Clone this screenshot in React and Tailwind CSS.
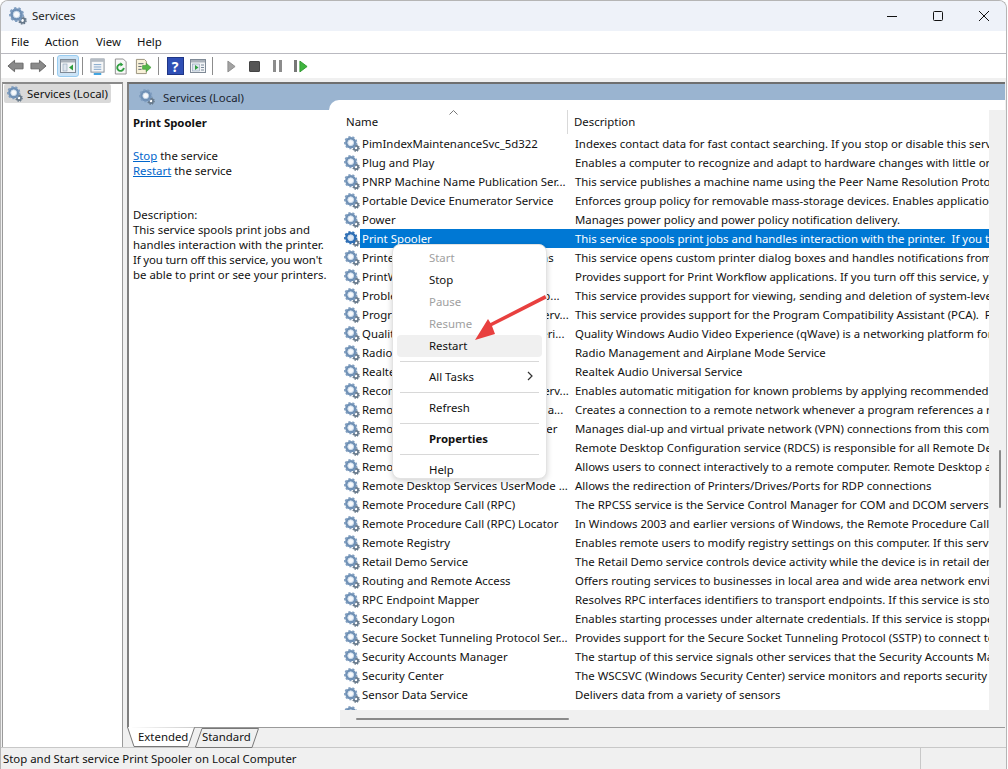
import React from "react";

const Gear = ({ selected = false, className = "w-4 h-4" }) => (
  <svg viewBox="0 0 16 16" className={className + " shrink-0"}>
    <circle cx="12" cy="12" r="2.1" fill="#fff" stroke="#66788a" strokeWidth="1.7" />
    <circle cx="12" cy="12" r="3.2" fill="none" stroke="#66788a" strokeWidth="1.2" strokeDasharray="1.4 1.1" />
    <circle cx="6.7" cy="6.7" r="4.3" fill="none" stroke={selected ? "#2f6fb5" : "#6f90b5"} strokeWidth="2.6" />
    <circle cx="6.7" cy="6.7" r="5.8" fill="none" stroke={selected ? "#2f6fb5" : "#7f9dbf"} strokeWidth="1.7" strokeDasharray="2.1 1.95" />
    <circle cx="6.7" cy="6.7" r="2.9" fill={selected ? "#dfe9f5" : "#f7f9fc"} stroke="#b8cde2" strokeWidth="0.7" />
  </svg>
);

const rows = [
  ["PimIndexMaintenanceSvc_5d322", "Indexes contact data for fast contact searching. If you stop or disable this service, contact data might be missing"],
  ["Plug and Play", "Enables a computer to recognize and adapt to hardware changes with little or no user input. Stopping or disabling"],
  ["PNRP Machine Name Publication Ser...", "This service publishes a machine name using the Peer Name Resolution Protocol. Configuration is managed via"],
  ["Portable Device Enumerator Service", "Enforces group policy for removable mass-storage devices. Enables applications such as Windows Media Player"],
  ["Power", "Manages power policy and power policy notification delivery."],
  ["Print Spooler", "This service spools print jobs and handles interaction with the printer.  If you turn off this service, you won't"],
  ["Printer Extensions and Notifications", "This service opens custom printer dialog boxes and handles notifications from a remote print server or a printer"],
  ["PrintWorkflow_5d322", "Provides support for Print Workflow applications. If you turn off this service, you may not be able to print"],
  ["Problem Reports Control Panel Sup...", "This service provides support for viewing, sending and deletion of system-level problem reports for the Problem"],
  ["Program Compatibility Assistant Serv...", "This service provides support for the Program Compatibility Assistant (PCA).  PCA monitors programs installed"],
  ["Quality Windows Audio Video Experi...", "Quality Windows Audio Video Experience (qWave) is a networking platform for Audio Video (AV) streaming"],
  ["Radio Management Service", "Radio Management and Airplane Mode Service"],
  ["Realtek Audio Universal Service", "Realtek Audio Universal Service"],
  ["Recommended Troubleshooting Serv...", "Enables automatic mitigation for known problems by applying recommended troubleshooting. If stopped, your"],
  ["Remote Access Auto Connection Ma...", "Creates a connection to a remote network whenever a program references a remote DNS or NetBIOS name or"],
  ["Remote Access Connection Manager", "Manages dial-up and virtual private network (VPN) connections from this computer to the Internet or other remote"],
  ["Remote Desktop Configuration", "Remote Desktop Configuration service (RDCS) is responsible for all Remote Desktop Services and Remote Desktop"],
  ["Remote Desktop Services", "Allows users to connect interactively to a remote computer. Remote Desktop and Remote Desktop Session Host"],
  ["Remote Desktop Services UserMode ...", "Allows the redirection of Printers/Drives/Ports for RDP connections"],
  ["Remote Procedure Call (RPC)", "The RPCSS service is the Service Control Manager for COM and DCOM servers. It performs object activations"],
  ["Remote Procedure Call (RPC) Locator", "In Windows 2003 and earlier versions of Windows, the Remote Procedure Call (RPC) Locator service manages the"],
  ["Remote Registry", "Enables remote users to modify registry settings on this computer. If this service is stopped, the registry can be"],
  ["Retail Demo Service", "The Retail Demo service controls device activity while the device is in retail demo mode."],
  ["Routing and Remote Access", "Offers routing services to businesses in local area and wide area network environments."],
  ["RPC Endpoint Mapper", "Resolves RPC interfaces identifiers to transport endpoints. If this service is stopped or disabled, programs using"],
  ["Secondary Logon", "Enables starting processes under alternate credentials. If this service is stopped, this type of logon access will be"],
  ["Secure Socket Tunneling Protocol Ser...", "Provides support for the Secure Socket Tunneling Protocol (SSTP) to connect to remote computers using VPN."],
  ["Security Accounts Manager", "The startup of this service signals other services that the Security Accounts Manager (SAM) is ready to accept"],
  ["Security Center", "The WSCSVC (Windows Security Center) service monitors and reports security health settings on the computer."],
  ["Sensor Data Service", "Delivers data from a variety of sensors"],
  ["", ""],
];

const menu = [
  ["Start", "off"], ["Stop", ""], ["Pause", "off"], ["Resume", "off"], ["Restart", "hover"], "-",
  ["All Tasks", "sub"], "-", ["Refresh", ""], "-", ["Properties", "bold"], "-", ["Help", ""],
];

const Tb = ({ w = "w-[23px]", active = false, children }) => (
  <div className={`${w} h-[22px] flex items-center justify-center shrink-0 ${active ? "bg-[#cce4f7] border border-[#99ccf0] rounded-[3px]" : ""}`}>{children}</div>
);
const Sep = () => <div className="w-px h-[18px] bg-[#8c8c8c] mx-[3px] shrink-0" />;

const Win = ({ children }) => (
  <svg viewBox="0 0 16 16" className="w-4 h-4">
    <rect x="0.5" y="1.5" width="15" height="13" fill="#f3f5f7" stroke="#7f8a96" />
    <rect x="1" y="2" width="14" height="2.5" fill="#a9b1ba" />
    {children}
  </svg>
);

export default function App() {
  return (
    <div className="relative w-[1008px] h-[769px] overflow-hidden bg-white text-[11.4px] leading-[15px] text-[#111] font-['Noto_Sans','Open_Sans',sans-serif]">
      <div className="w-[1007px] h-[769px] flex flex-col bg-[#f0f0f0] border-l border-r border-t border-[#b5b5b5] rounded-t-[8px] overflow-hidden">
        {/* title bar */}
        <div className="h-[30px] shrink-0 bg-[#eef2f9] flex items-center pl-[8px]">
          <Gear className="w-[18px] h-[18px] -mt-[1px]" />
          <span className="ml-[5px] text-[#222] -mt-[2px]">Services</span>
          <div className="ml-auto -mr-[1px] flex items-center">
            <div className="w-[46px] h-[30px] flex items-center justify-center">
              <div className="w-[10px] h-px bg-[#111]" />
            </div>
            <div className="w-[46px] h-[30px] flex items-center justify-center">
              <div className="w-[10px] h-[10px] border border-[#111] rounded-[1.5px]" />
            </div>
            <div className="w-[46px] h-[30px] flex items-center justify-center">
              <svg viewBox="0 0 10 10" className="w-[10px] h-[10px]"><path d="M0 0L10 10M10 0L0 10" stroke="#111" strokeWidth="1" /></svg>
            </div>
          </div>
        </div>
        {/* menu */}
        <div className="h-[23px] shrink-0 bg-white border-b border-[#b9b9c0] flex items-center pl-[10px] pb-[2px] text-[#111]">
          <span className="w-[34px]">File</span>
          <span className="w-[51px]">Action</span>
          <span className="w-[41px]">View</span>
          <span>Help</span>
        </div>
        {/* toolbar */}
        <div className="h-[24px] shrink-0 bg-white flex items-center pl-[3px]">
          <Tb>
            <svg viewBox="0 0 18 14" className="w-[17px] h-[14px]"><path d="M1 7L8 1V4H17V10H8V13Z" fill="#8a8a8a" stroke="#666" /></svg>
          </Tb>
          <Tb>
            <svg viewBox="0 0 18 14" className="w-[17px] h-[14px]"><path d="M17 7L10 1V4H1V10H10V13Z" fill="#8a8a8a" stroke="#666" /></svg>
          </Tb>
          <Sep />
          <Tb w="w-[22px]" active>
            <Win><rect x="3" y="6" width="4" height="7" fill="#dfe6ee" stroke="#8ea1b5" strokeWidth="0.6" /><path d="M13 6.5V12.5L9 9.5Z" fill="#2e9e3e" /></Win>
          </Tb>
          <Sep />
          <Tb w="w-[23px]">
            <svg viewBox="0 0 16 18" className="w-[15px] h-[17px]"><rect x="1" y="1" width="14" height="14" fill="#f5f6f7" stroke="#808a95" /><rect x="1" y="1" width="14" height="3" fill="#b5bcc4" /><path d="M4 7H12M4 9.5H12M4 12H12" stroke="#7aa0c8" /><rect x="4" y="16" width="8" height="2" fill="#38a0e0" /></svg>
          </Tb>
          <Tb>
            <svg viewBox="0 0 16 18" className="w-[15px] h-[17px]"><path d="M2.5 1H11L14 4V17H2.5Z" fill="#f7f7f7" stroke="#8c8c8c" /><path d="M11.5 10.5A3.5 3.5 0 1 1 9 6.8" fill="none" stroke="#2f9e3f" strokeWidth="2" /><path d="M8 4.5L11 7L8 9Z" fill="#2f9e3f" /></svg>
          </Tb>
          <Tb>
            <svg viewBox="0 0 18 18" className="w-[17px] h-[17px]"><path d="M1.5 1.5H10L12 3.5V16.5H1.5Z" fill="#f8f1d8" stroke="#97907a" /><path d="M3.5 6H9M3.5 9H7M3.5 12H7" stroke="#5c6670" /><path d="M8 8H12V5.5L17 10L12 14.5V12H8Z" fill="#55b848" stroke="#3a8f33" strokeWidth="0.6" /></svg>
          </Tb>
          <Sep />
          <div className="w-[2px] shrink-0" />
          <Tb w="w-[22px]">
            <div className="w-[17px] h-[18px] bg-[#2f4fb5] border border-[#1f3585] text-white font-bold text-[14px] leading-[17px] text-center">?</div>
          </Tb>
          <Tb w="w-[23px]">
            <Win><rect x="2.5" y="6" width="7" height="7" fill="#dfe6ee" stroke="#8ea1b5" strokeWidth="0.6" /><path d="M5 7V12L8.5 9.5Z" fill="#2e9e3e" /><path d="M11 7H14M11 9.5H14M11 12H14" stroke="#7a8a9a" /></Win>
          </Tb>
          <Sep />
          <div className="w-[4px] shrink-0" />
          <Tb>
            <svg viewBox="0 0 10 14" className="w-[9px] h-[13px]"><path d="M1 1L9 7L1 13Z" fill="#a3a3a3" stroke="#8a8a8a" /></svg>
          </Tb>
          <Tb>
            <div className="w-[11px] h-[11px] bg-[#555] border border-[#444] rounded-[1px]" />
          </Tb>
          <Tb>
            <div className="flex gap-[3px]"><div className="w-[3px] h-[12px] bg-[#8c8c8c]" /><div className="w-[3px] h-[12px] bg-[#8c8c8c]" /></div>
          </Tb>
          <Tb>
            <div className="flex items-center gap-[2px]"><div className="w-[3px] h-[12px] bg-[#777]" /><svg viewBox="0 0 10 14" className="w-[9px] h-[13px]"><path d="M1 1L9 7L1 13Z" fill="#3fb53f" stroke="#2e962e" /></svg></div>
          </Tb>
        </div>
        {/* band */}
        <div className="h-[4px] shrink-0 bg-[#f0f0f0]" />
        {/* main */}
        <div className="flex-1 min-h-0 flex">
          {/* tree */}
          <div className="w-[121px] ml-px shrink-0 bg-white border-t-2 border-r border-l border-[#9a9a9a] border-t-[#8a8a8a] pl-[1px]">
            <div className="h-[19px] w-[107px] bg-[#d9d9d9] rounded-[2px] flex items-center pl-[3px]">
              <Gear />
              <span className="ml-[4px] whitespace-nowrap">Services (Local)</span>
            </div>
          </div>
          <div className="w-[4px] shrink-0" />
          {/* right */}
          <div className="flex-1 min-w-0 flex flex-col mr-[1px]">
            <div className="h-[645px] shrink-0 bg-white border-t-2 border-l-2 border-[#7f7f7f] border-t-[#6f6f6f] flex flex-col">
              <div className="h-[26px] shrink-0 bg-[#9ab4d0] flex items-center pl-[10px]">
                <Gear />
                <span className="ml-[8px] text-[#1a2430]">Services (Local)</span>
              </div>
              <div className="flex-1 min-h-0 flex">
                <div className="w-[200px] shrink-0 pl-[4px] pt-[5px] whitespace-nowrap">
                  <div className="font-bold h-[15px]">Print Spooler</div>
                  <div className="mt-[18px]"><span className="text-[#0066cc] underline">Stop</span> the service</div>
                  <div><span className="text-[#0066cc] underline">Restart</span> the service</div>
                  <div className="mt-[29px]">Description:</div>
                  <div>This service spools print jobs and</div>
                  <div>handles interaction with the printer.</div>
                  <div className="tracking-[-0.15px]">If you turn off this service, you won't</div>
                  <div>be able to print or see your printers.</div>
                </div>
                {/* list */}
                <div className="relative z-10 flex-1 min-w-0 -mt-[10px] bg-white rounded-tl-[10px] overflow-hidden flex flex-col">
                  <div className="flex-1 min-h-0 flex pl-[11px]">
                    <div className="flex-1 min-w-0 flex flex-col overflow-hidden">
                      <div className="h-[34px] shrink-0 relative flex">
                        <div className="w-[228px] shrink-0 border-r border-[#d9d9d9] mt-[10px] pt-[4px] pl-[6px]">Name</div>
                        <div className="pl-[6px] mt-[14px]">Description</div>
                        <svg viewBox="0 0 9 5" className="absolute left-[109px] top-[10px] w-[9px] h-[5px]"><path d="M0.5 4.5L4.5 0.5L8.5 4.5" fill="none" stroke="#777" /></svg>
                      </div>
                      {rows.map(([n, d], i) => {
                        const sel = n === "Print Spooler";
                        return (
                          <div key={i} className="h-[19px] shrink-0 flex items-center whitespace-pre">
                            <div className="w-[20px] shrink-0 pl-[4px]"><Gear selected={sel} /></div>
                            <div className={`flex-1 min-w-0 flex items-center h-[19px] ${sel ? "bg-[#0078d4] text-white" : ""}`}>
                              <div className="w-[213px] shrink-0 pl-[2px] overflow-hidden">{n}</div>
                              <div className="pl-[2px]">{d}</div>
                            </div>
                          </div>
                        );
                      })}
                    </div>
                    <div className="w-[16px] shrink-0 bg-[#f0f0f0] mt-[10px] flex justify-center pt-[340px] pl-[5px]">
                      <div className="w-[2px] h-[58px] bg-[#8a8a8a] rounded-full" />
                    </div>
                  </div>
                  <div className="h-[17px] shrink-0 ml-[11px] bg-[#f0f0f0] pl-[16px] pt-[8px]">
                    <div className="w-[213px] h-[2px] bg-[#8a8a8a] rounded-full" />
                  </div>
                </div>
              </div>
            </div>
            {/* tabs */}
            <div className="h-[20px] shrink-0 flex border-t border-[#9a9a9a]">
              <div className="relative w-[68px] h-[20px] -mt-px pl-[11px] pt-[2px] z-10 shrink-0">
                <svg viewBox="0 0 68 20" className="absolute inset-0 w-[68px] h-[20px]"><path d="M0.5 0L7 19.5H61L67.5 0.5" fill="#fff" stroke="#777" /></svg>
                <span className="relative">Extended</span>
              </div>
              <div className="relative w-[64px] h-[20px] pl-[7px] pt-[1px] shrink-0">
                <svg viewBox="0 0 64 20" className="absolute inset-0 w-[64px] h-[20px]"><path d="M0.5 19L7 0.5H63.5L57 19.5H0.5" fill="#f0f0f0" stroke="#777" /></svg>
                <span className="relative">Standard</span>
              </div>
            </div>
          </div>
        </div>
        {/* status */}
        <div className="h-[22px] shrink-0 border-t border-[#c8c8c8] flex items-center pl-[2px]">
          <span className="flex-1">Stop and Start service Print Spooler on Local Computer</span>
          <div className="w-px h-full bg-[#c8c8c8] mr-[85px]" />
        </div>
      </div>

      {/* context menu */}
      <div className="absolute left-[392px] top-[244px] w-[155px] h-[235px] z-20 bg-white border border-[#e3e3e3] rounded-[8px] shadow-[0_2px_6px_rgba(0,0,0,0.18)] px-[4px] pt-[2px]">
        {menu.map((m, i) =>
          m === "-" ? (
            <div key={i} className="h-px bg-[#d8d8d8] mx-[3px] my-[4px]" />
          ) : (
            <div key={i} className={`h-[22px] flex items-center pl-[32px] pr-[9px] pb-[2px] rounded-[4px] ${m[1] === "off" ? "text-[#a0a0a0]" : "text-[#111]"} ${m[1] === "hover" ? "bg-[#f0f0f0]" : ""} ${m[1] === "bold" ? "font-bold" : ""}`}>
              <span>{m[0]}</span>
              {m[1] === "sub" && (
                <svg viewBox="0 0 6 10" className="ml-auto w-[6px] h-[10px]"><path d="M1 1L5 5L1 9" fill="none" stroke="#333" strokeWidth="1.2" /></svg>
              )}
            </div>
          )
        )}
      </div>
      {/* annotation arrow */}
      <svg viewBox="0 0 90 60" className="absolute left-[465px] top-[290px] w-[90px] h-[60px] z-30">
        <path d="M80 5L81.5 8.5L27 36L30 44L10 50L23 29L25.5 33Z" fill="#e8403f" />
      </svg>
    </div>
  );
}
